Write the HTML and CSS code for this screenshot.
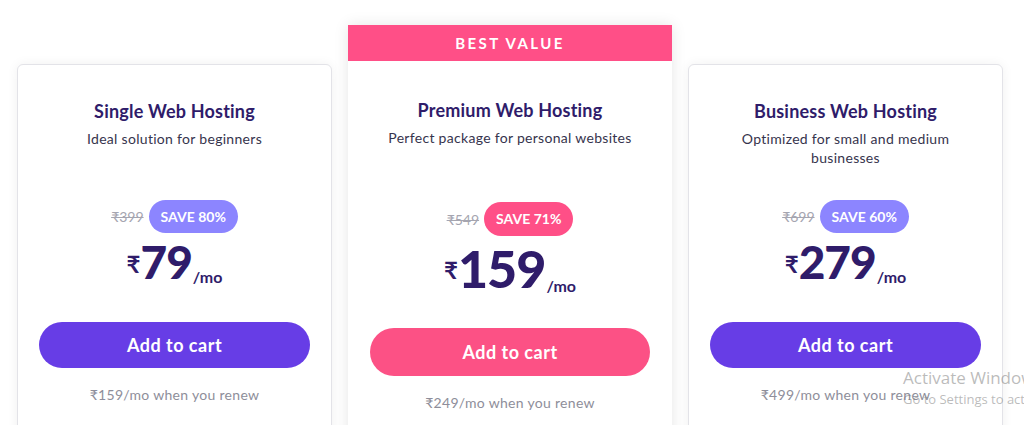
FILE: index.html
```html
<!DOCTYPE html>
<html lang="en">
<head>
    <meta charset="UTF-8">
    <meta name="viewport" content="width=device-width, initial-scale=1.0">
    <title>Hosting Plans</title>
    <link rel="stylesheet" href="styles.css">
</head>
<body>
    <div class="plans">
        <div class="plan">
            <h2 class="plan-title">Single Web Hosting</h2>
            <p class="plan-desc">Ideal solution for beginners</p>
            <div class="discount">
                <span class="old-price">₹399</span>
                <span class="save">SAVE 80%</span>
            </div>
            <div class="price"><span class="currency">₹</span><span class="amount">79</span><span class="period">/mo</span></div>
            <button class="cart-btn">Add to cart</button>
            <p class="renew">₹159/mo when you renew</p>
        </div>

        <div class="plan featured">
            <div class="ribbon">BEST VALUE</div>
            <div class="plan-body">
                <h2 class="plan-title">Premium Web Hosting</h2>
                <p class="plan-desc">Perfect package for personal websites</p>
                <div class="discount">
                    <span class="old-price">₹549</span>
                    <span class="save">SAVE 71%</span>
                </div>
                <div class="price"><span class="currency">₹</span><span class="amount">159</span><span class="period">/mo</span></div>
                <button class="cart-btn">Add to cart</button>
                <p class="renew">₹249/mo when you renew</p>
            </div>
        </div>

        <div class="plan">
            <h2 class="plan-title">Business Web Hosting</h2>
            <p class="plan-desc">Optimized for small and medium businesses</p>
            <div class="discount">
                <span class="old-price">₹699</span>
                <span class="save">SAVE 60%</span>
            </div>
            <div class="price"><span class="currency">₹</span><span class="amount">279</span><span class="period">/mo</span></div>
            <button class="cart-btn">Add to cart</button>
            <p class="renew">₹499/mo when you renew</p>
        </div>
    </div>

    <div class="watermark">
        <div class="wm-title">Activate Windows</div>
        <div class="wm-sub">Go to Settings to activate Windows.</div>
    </div>
</body>
</html>
```

FILE: styles.css
```css
body {
    margin: 0;
    background: #ffffff;
    font-family: Lato, "Noto Sans", "DejaVu Sans", sans-serif;
    color: #2f1c6a;
    overflow: hidden;
    height: 425px;
}
.plans {
    display: flex;
    align-items: flex-start;
    gap: 16px;
    padding: 25px 0 0 17px;
}
.plan {
    width: 315px;
    box-sizing: border-box;
    margin-top: 39px;
    background: #fff;
    border: 1px solid #e3e3e8;
    border-radius: 6px;
    box-shadow: 0 0 12px rgba(0, 0, 0, 0.06);
    padding: 34px 21px 40px;
    text-align: center;
}
.plan.featured {
    width: 324px;
    margin-top: 0;
    padding: 0;
    border: none;
    border-radius: 0;
    box-shadow: 0 0 14px rgba(0, 0, 0, 0.1);
}
.ribbon {
    background: #ff4f87;
    color: #fff;
    font-weight: 700;
    font-size: 15px;
    letter-spacing: 2.4px;
    height: 36px;
    line-height: 36px;
}
.plan-body {
    padding: 37px 22px 40px;
}
.plan-title {
    margin: 0;
    font-size: 18px;
    line-height: 24px;
    font-weight: 700;
    letter-spacing: 0.2px;
    color: #2f1c6a;
}
.plan-desc {
    margin: 6px 0 0;
    font-size: 14px;
    line-height: 19px;
    letter-spacing: 0.3px;
    color: #36344d;
    min-height: 40px;
}
.discount {
    margin-top: 31px;
    display: flex;
    justify-content: center;
    align-items: center;
    gap: 5px;
}
.featured .discount {
    margin-top: 34px;
}
.old-price {
    font-size: 14px;
    color: #a5a5b0;
    text-decoration: line-through;
}
.save {
    background: #8c85ff;
    color: #fff;
    font-weight: 700;
    font-size: 14px;
    height: 33px;
    line-height: 33px;
    padding: 0 12px;
    border-radius: 17px;
}
.featured .save {
    background: #ff4f87;
    height: 34px;
    line-height: 34px;
}
.price {
    margin-top: 4px;
    display: flex;
    justify-content: center;
    align-items: baseline;
    line-height: 50px;
}
.currency {
    font-size: 24px;
    font-weight: 700;
    align-self: flex-start;
    margin-top: 2px;
}
.amount {
    font-size: 46px;
    font-weight: 900;
    letter-spacing: -1px;
}
.period {
    font-size: 16px;
    font-weight: 700;
    margin-left: 1px;
    position: relative;
    top: 4px;
}
.featured .amount {
    font-size: 52px;
}
.featured .price {
    line-height: 56px;
}
.cart-btn {
    display: block;
    width: 100%;
    margin-top: 24px;
    height: 46px;
    border: none;
    border-radius: 23px;
    background: #673de6;
    color: #fff;
    font-family: inherit;
    font-size: 18px;
    font-weight: 700;
    letter-spacing: 0.5px;
    cursor: pointer;
}
.featured .cart-btn {
    background: #fc5185;
    height: 48px;
    border-radius: 24px;
    margin-top: 18px;
}
.renew {
    margin: 18px 0 0;
    font-size: 14px;
    letter-spacing: 0.3px;
    color: #8e8e9a;
}
.watermark {
    position: absolute;
    left: 903px;
    top: 366px;
    color: rgba(120, 120, 120, 0.5);
    font-family: "Open Sans", sans-serif;
    white-space: nowrap;
}
.wm-title {
    font-size: 17px;
    line-height: 24px;
}
.wm-sub {
    font-size: 13px;
    line-height: 18px;
}
```
